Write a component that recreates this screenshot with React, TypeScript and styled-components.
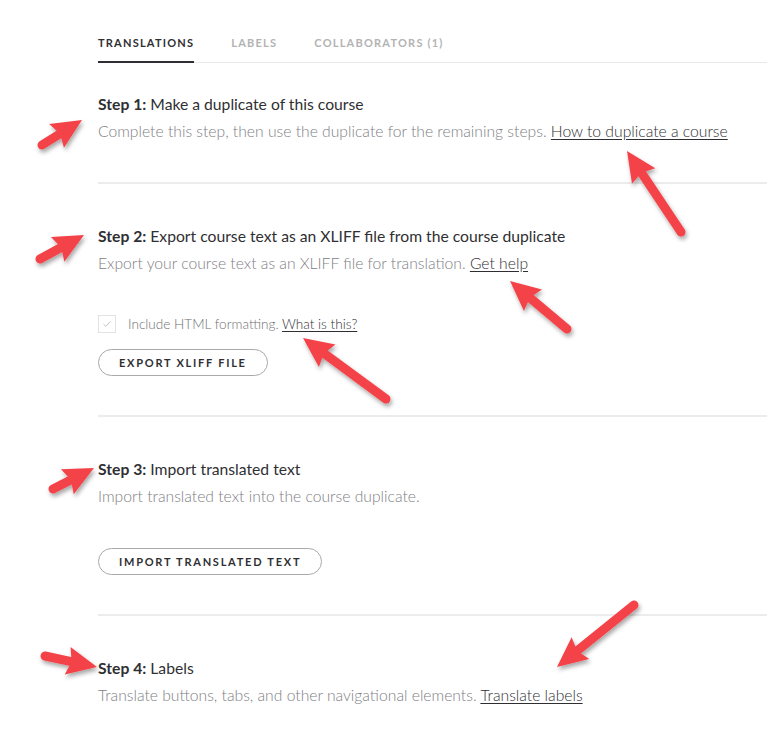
import React from "react";
import styled, { createGlobalStyle } from "styled-components";

const Global = createGlobalStyle`
  html, body { margin: 0; padding: 0; background: #fff; }
  body { font-family: Lato, "Open Sans", sans-serif; -webkit-font-smoothing: antialiased; }
  * { box-sizing: border-box; }
`;

const Page = styled.div`
  position: relative;
  width: 767px;
  height: 739px;
  overflow: hidden;
  padding-left: 98px;
  background: #fff;
`;

const TabBar = styled.div`
  display: flex;
  align-items: flex-end;
  gap: 37px;
  height: 63px;
  border-bottom: 1px solid #e9e9e9;
`;

const Tab = styled.div<{ $active?: boolean }>`
  font-size: 11px;
  font-weight: 700;
  letter-spacing: 1.22px;
  line-height: 16px;
  text-transform: uppercase;
  color: ${(p) => (p.$active ? "#2f2f33" : "#b3b3b3")};
  padding-bottom: 10px;
  margin-bottom: -1px;
  border-bottom: 2px solid ${(p) => (p.$active ? "#2f2f33" : "transparent")};
`;

const Section = styled.section<{ $first?: boolean }>`
  display: flex;
  flex-direction: column;
  align-items: flex-start;
  padding: ${(p) => (p.$first ? "29px" : "40px")} 0 39px;
  border-top: ${(p) => (p.$first ? "none" : "2px solid #ececec")};
`;

const Title = styled.h2`
  margin: 0;
  font-size: 15.7px;
  font-weight: 400;
  line-height: 24px;
  color: #2f2f33;
  b { font-weight: 700; }
`;

const Desc = styled.p`
  margin: 3px 0 0;
  font-size: 15.7px;
  font-weight: 300;
  line-height: 24px;
  color: #808085;
`;

const Link = styled.a`
  color: #2f2f33;
  text-decoration: underline;
  text-underline-offset: 2px;
  cursor: pointer;
`;

const CheckRow = styled.label`
  display: flex;
  align-items: center;
  gap: 12px;
  margin-top: 39px;
  height: 20px;
  font-size: 13.6px;
  font-weight: 300;
  color: #707075;
`;

const Box = styled.span`
  width: 18px;
  height: 18px;
  border: 1px solid #e3e3e3;
  display: flex;
  align-items: center;
  justify-content: center;
`;

const PillButton = styled.button<{ $mt: number }>`
  margin-top: ${(p) => p.$mt}px;
  height: 27px;
  padding: 0 20px;
  border: 1px solid #a9a9ad;
  border-radius: 14px;
  background: #fff;
  font-family: Lato, sans-serif;
  font-size: 11px;
  font-weight: 700;
  letter-spacing: 1.75px;
  color: #2f2f33;
  text-transform: uppercase;
  cursor: pointer;
`;

const Overlay = styled.svg`
  position: absolute;
  left: 0;
  top: 0;
  pointer-events: none;
`;

type Pt = [number, number];

const Arrow = ({ tail, tip }: { tail: Pt; tip: Pt }) => {
  const dx = tip[0] - tail[0];
  const dy = tip[1] - tail[1];
  const len = Math.hypot(dx, dy);
  const ux = dx / len;
  const uy = dy / len;
  const nx = -uy;
  const ny = ux;
  const L = 30;
  const W = 14;
  const bx = tip[0] - ux * L;
  const by = tip[1] - uy * L;
  const pts = [
    [tip[0], tip[1]],
    [bx + nx * W, by + ny * W],
    [bx + ux * 4, by + uy * 4],
    [bx - nx * W, by - ny * W],
  ]
    .map((p) => p.join(","))
    .join(" ");
  return (
    <g filter="url(#shadow)">
      <line
        x1={tail[0]}
        y1={tail[1]}
        x2={bx + ux * 6}
        y2={by + uy * 6}
        stroke="#f4434a"
        strokeWidth={9}
        strokeLinecap="round"
      />
      <polygon points={pts} fill="#f4434a" />
    </g>
  );
};

const arrows: { tail: Pt; tip: Pt }[] = [
  { tail: [42, 145], tip: [82, 120] },
  { tail: [681, 232], tip: [627, 151] },
  { tail: [40, 259], tip: [84, 235] },
  { tail: [567, 329], tip: [510, 281] },
  { tail: [386, 399], tip: [303, 338] },
  { tail: [53, 489], tip: [94, 468] },
  { tail: [634, 605], tip: [557, 667] },
  { tail: [45, 656], tip: [97, 667] },
];

export default function App() {
  return (
    <>
      <Global />
      <Page>
        <TabBar>
          <Tab $active>Translations</Tab>
          <Tab>Labels</Tab>
          <Tab>Collaborators (1)</Tab>
        </TabBar>

        <Section $first>
          <Title>
            <b>Step 1:</b> Make a duplicate of this course
          </Title>
          <Desc>
            Complete this step, then use the duplicate for the remaining steps.{" "}
            <Link>How to duplicate a course</Link>
          </Desc>
        </Section>

        <Section>
          <Title>
            <b>Step 2:</b> Export course text as an XLIFF file from the course duplicate
          </Title>
          <Desc>
            Export your course text as an XLIFF file for translation. <Link>Get help</Link>
          </Desc>
          <CheckRow>
            <Box>
              <svg width="10" height="8" viewBox="0 0 10 8">
                <path d="M1.5 4.2 L3.8 6.3 L8.5 1.5" fill="none" stroke="#c4c4c4" strokeWidth="1" />
              </svg>
            </Box>
            <span>
              Include HTML formatting. <Link>What is this?</Link>
            </span>
          </CheckRow>
          <PillButton $mt={15}>Export XLIFF file</PillButton>
        </Section>

        <Section>
          <Title>
            <b>Step 3:</b> Import translated text
          </Title>
          <Desc>Import translated text into the course duplicate.</Desc>
          <PillButton $mt={40}>Import translated text</PillButton>
        </Section>

        <Section>
          <Title>
            <b>Step 4:</b> Labels
          </Title>
          <Desc>
            Translate buttons, tabs, and other navigational elements. <Link>Translate labels</Link>
          </Desc>
        </Section>

        <Overlay width={767} height={739} viewBox="0 0 767 739">
          <defs>
            <filter id="shadow" x="-30%" y="-30%" width="160%" height="160%">
              <feDropShadow dx="1.5" dy="3" stdDeviation="2" floodColor="#000" floodOpacity="0.35" />
            </filter>
          </defs>
          {arrows.map((a, i) => (
            <Arrow key={i} tail={a.tail} tip={a.tip} />
          ))}
        </Overlay>
      </Page>
    </>
  );
}
